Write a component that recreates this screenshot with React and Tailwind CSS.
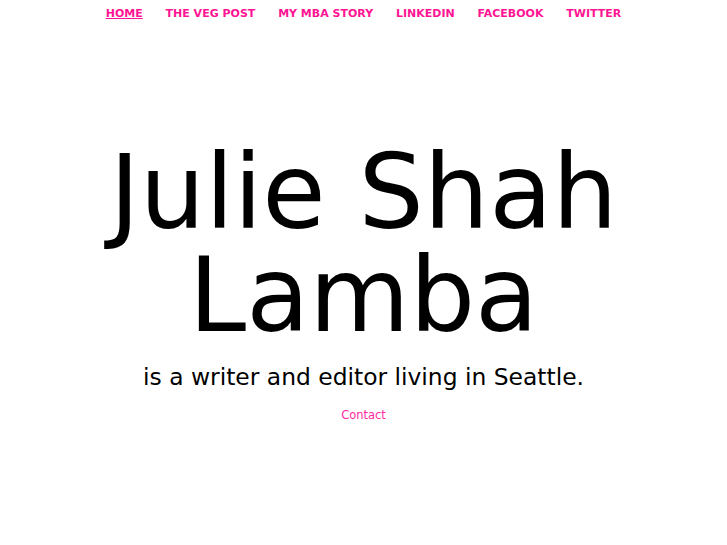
export default function App() {
  const links = ["HOME", "THE VEG POST", "MY MBA STORY", "LINKEDIN", "FACEBOOK", "TWITTER"];
  return (
    <div className="min-h-[545px] bg-white text-black" style={{ fontFamily: '"DejaVu Sans", sans-serif' }}>
      <nav className="flex justify-center pt-[7px]">
        {links.map((l, i) => (
          <a
            key={l}
            href="#"
            className={`mx-[11.4px] text-[11px] font-bold leading-[14px] text-[#ff1493] ${i === 0 ? "underline" : "no-underline"}`}
          >
            {l}
          </a>
        ))}
      </nav>
      <div className="flex flex-col items-center text-center pt-[120px]">
        <h1 className="text-[103px] font-normal leading-[103px] m-0">
          Julie Shah
          <br />
          Lamba
        </h1>
        <p className="text-[23.4px] leading-[28px] mt-[16px]">is a writer and editor living in Seattle.</p>
        <a href="#" className="text-[11.5px] leading-[16px] text-[#ff2a9f] mt-[16px]">Contact</a>
      </div>
    </div>
  );
}
